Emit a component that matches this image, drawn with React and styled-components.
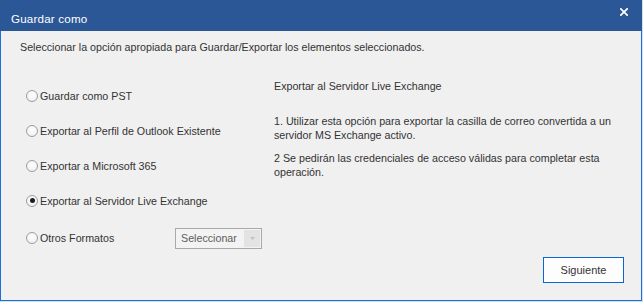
import React, { useState } from 'react';
import styled, { createGlobalStyle } from 'styled-components';

const GlobalStyle = createGlobalStyle`
    html, body {
        margin: 0;
        padding: 0;
        background: #d6e0ec;
    }
    body {
        font-family: "Liberation Sans", Arial, sans-serif;
    }
`;

const options = [
    'Guardar como PST',
    'Exportar al Perfil de Outlook Existente',
    'Exportar a Microsoft 365',
    'Exportar al Servidor Live Exchange',
];

const App = () => {
    const [selected, setSelected] = useState(3);

    return (<Page>
        <GlobalStyle />
        <Window>
            <TitleBar>
                <Title>Guardar como</Title>
                <CloseButton aria-label="Cerrar">
                    <svg width="8" height="8" viewBox="0 0 8 8">
                        <path d="M0.8 0.8 L7.2 7.2 M7.2 0.8 L0.8 7.2" stroke="#fff" strokeWidth="1.7" strokeLinecap="square" />
                    </svg>
                </CloseButton>
            </TitleBar>
            <Body>
                <Intro>Seleccionar la opción apropiada para Guardar/Exportar los elementos seleccionados.</Intro>
                <Content>
                    <OptionList>
                        {options.map((label, i) => (
                            <OptionRow key={label} onClick={() => setSelected(i)}>
                                <Radio $checked={selected === i} />
                                <OptionLabel>{label}</OptionLabel>
                            </OptionRow>
                        ))}
                        <OptionRow $last onClick={() => setSelected(4)}>
                            <Radio $checked={selected === 4} />
                            <OptionLabel $width="135px">Otros Formatos</OptionLabel>
                            <Select>
                                <SelectText>Seleccionar</SelectText>
                                <SelectArrow>
                                    <svg width="5" height="3" viewBox="0 0 5 3">
                                        <path d="M0 0 H5 L2.5 3 Z" fill="#c2c2c2" />
                                    </svg>
                                </SelectArrow>
                            </Select>
                        </OptionRow>
                    </OptionList>
                    <Description>
                        <DescTitle>Exportar al Servidor Live Exchange</DescTitle>
                        <DescText>
                            1. Utilizar esta opción para exportar la casilla de correo convertida a un<br />
                            servidor MS Exchange activo.
                        </DescText>
                        <DescText $gap="9px">
                            2 Se pedirán las credenciales de acceso válidas para completar esta<br />
                            operación.
                        </DescText>
                    </Description>
                </Content>
                <Footer>
                    <Button>Siguiente</Button>
                </Footer>
            </Body>
        </Window>
    </Page>);
}

export default App;

const Page = styled.div`
    width: 643px;
    height: 302px;
    overflow: hidden;
`

const Window = styled.div`
    width: 642px;
    height: 301px;
    box-sizing: border-box;
    border: 1px solid #1b6fd6;
    border-top: none;
    background: #f0f0f0;
    display: flex;
    flex-direction: column;
`

const TitleBar = styled.div`
    height: 31px;
    margin: 0 -1px;
    background: #2b5797;
    display: flex;
    align-items: flex-start;
    justify-content: space-between;
    flex-shrink: 0;
`

const Title = styled.div`
    color: #ffffff;
    font-size: 11.6px;
    letter-spacing: 0.2px;
    line-height: 14px;
    padding: 12px 0 0 11px;
`

const CloseButton = styled.div`
    width: 8px;
    height: 8px;
    margin: 8px 14px 0 0;
    display: flex;
`

const Body = styled.div`
    flex: 1;
    display: flex;
    flex-direction: column;
    padding: 0 0 0 19px;
    color: #333333;
    font-size: 10.7px;
    line-height: 14px;
`

const Intro = styled.div`
    margin-top: 9px;
`

const Content = styled.div`
    display: grid;
    grid-template-columns: 248px 1fr;
    margin-top: 24px;
    padding-left: 6px;
`

const OptionList = styled.div`
    display: flex;
    flex-direction: column;
`

const OptionRow = styled.div`
    height: 35px;
    display: flex;
    align-items: center;
    margin-top: ${p => p.$last ? '2px' : '0'};
    cursor: default;
`

const Radio = styled.span`
    width: 12px;
    height: 12px;
    box-sizing: border-box;
    border-radius: 50%;
    border: 1px solid #9d9d9d;
    background: radial-gradient(circle at 50% 40%, #ffffff 0%, #f4f4f4 60%, #e6e6e6 100%);
    display: flex;
    align-items: center;
    justify-content: center;
    flex-shrink: 0;

    &::after {
        content: '';
        width: 5px;
        height: 5px;
        border-radius: 50%;
        background: #1c1c1c;
        display: ${p => p.$checked ? 'block' : 'none'};
    }
`

const OptionLabel = styled.span`
    margin-left: 2px;
    width: ${p => p.$width || 'auto'};
    white-space: nowrap;
`

const Select = styled.div`
    width: 87px;
    height: 21px;
    box-sizing: border-box;
    border: 1px solid #a9a9a9;
    background: #f3f3f3;
    display: flex;
    padding: 1px;
    margin-top: 2px;
`

const SelectText = styled.span`
    flex: 1;
    color: #5c5c5c;
    padding-left: 4px;
    line-height: 17px;
`

const SelectArrow = styled.span`
    width: 16px;
    background: #e3e3e3;
    display: flex;
    align-items: center;
    justify-content: center;
`

const Description = styled.div`
    padding-top: 1px;
`

const DescTitle = styled.div`
    margin-bottom: 21px;
`

const DescText = styled.p`
    margin: ${p => p.$gap || '0'} 0 0;
`

const Footer = styled.div`
    display: flex;
    justify-content: flex-end;
    padding: 0 17px 0 0;
    margin-top: 2px;
`

const Button = styled.button`
    width: 81px;
    height: 26px;
    box-sizing: border-box;
    border: 1px solid #0b66d3;
    background: #fdfdfd;
    color: #333333;
    font-family: "Liberation Sans", Arial, sans-serif;
    font-size: 11px;
    padding: 0;
`
